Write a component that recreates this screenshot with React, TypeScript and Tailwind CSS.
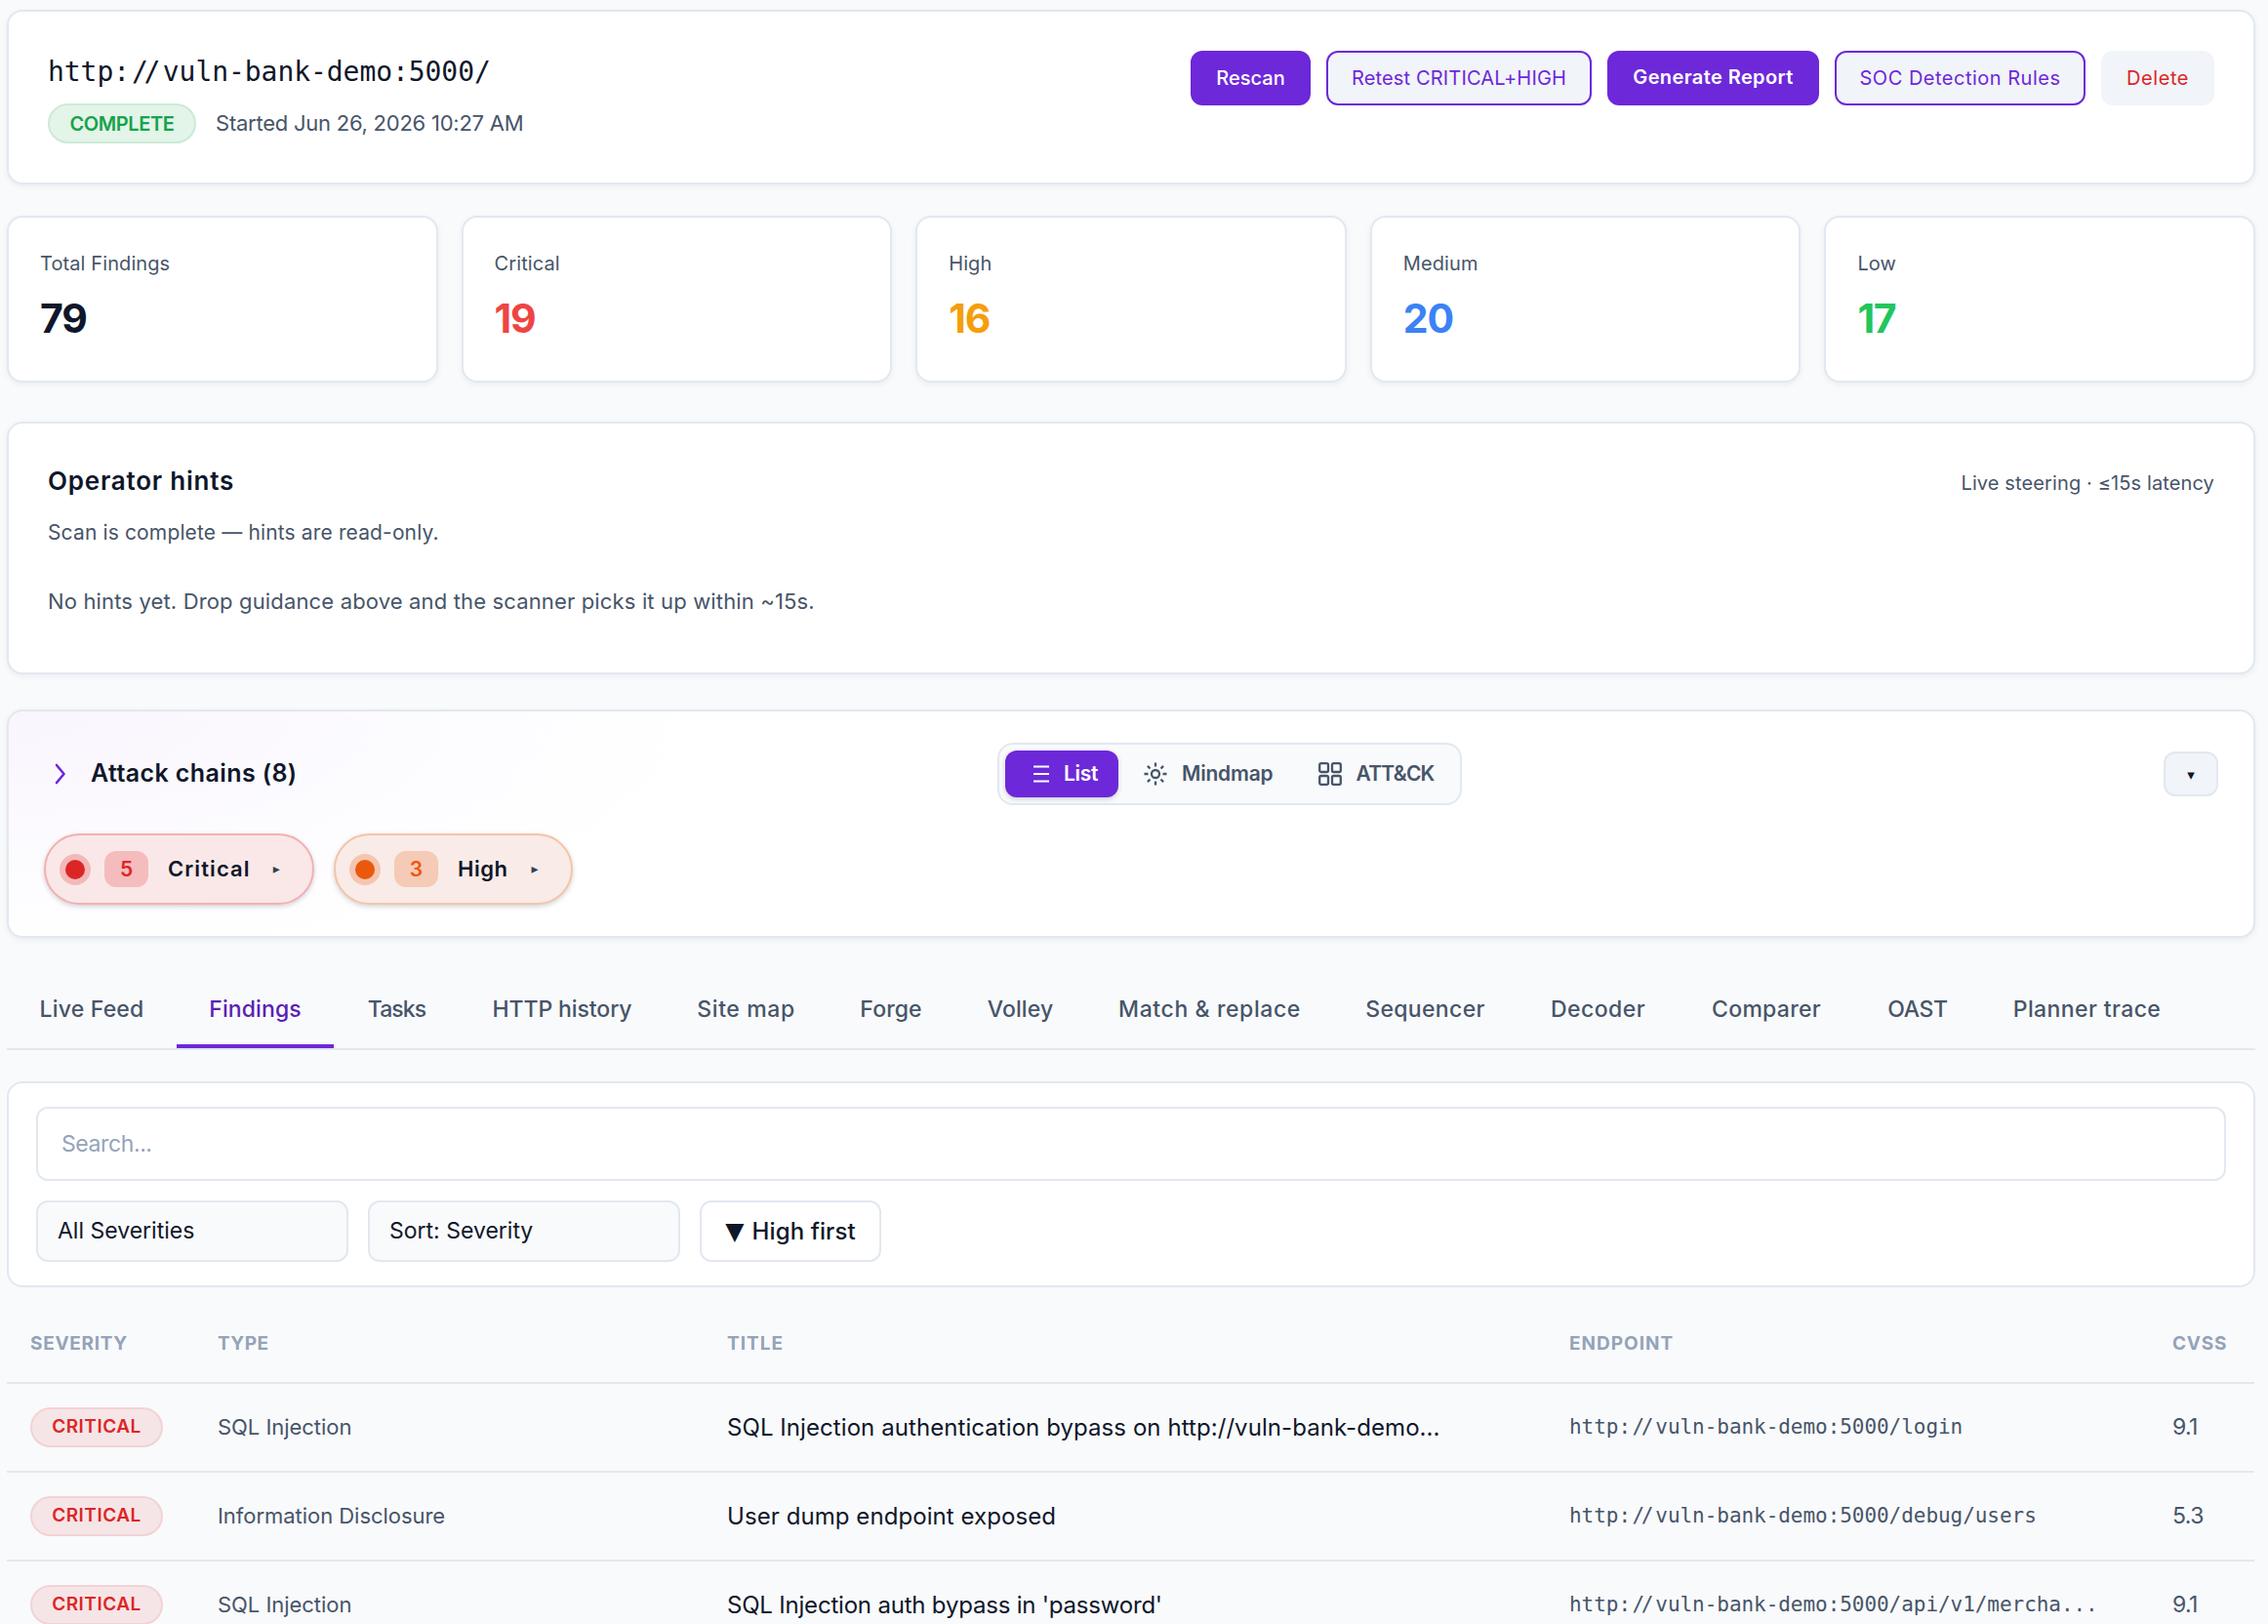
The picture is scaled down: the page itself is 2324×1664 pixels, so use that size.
import type { ReactNode } from 'react';

const actions = [
  { label: 'Rescan', className: 'w-[123px] bg-[#6d28d9] border-[#6d28d9] text-white font-medium' },
  { label: 'Retest CRITICAL+HIGH', className: 'w-[272px] bg-[#f1f4f9] border-[#6d28d9] text-[#6d28d9] tracking-[0.15px]' },
  { label: 'Generate Report', className: 'w-[217px] bg-[#6d28d9] border-[#6d28d9] text-white font-semibold tracking-[0.4px] pb-0.5' },
  { label: 'SOC Detection Rules', className: 'w-[257px] bg-[#f1f4f9] border-[#6d28d9] text-[#6d28d9] tracking-[0.5px]' },
  { label: 'Delete', className: 'w-[116px] bg-[#f1f4f9] border-[#f1f4f9] text-[#dc2626] tracking-[0.6px]' },
];

const stats = [
  { label: 'Total Findings', value: 79, color: 'text-[#0f172a]' },
  { label: 'Critical', value: 19, color: 'text-[#ef4444]' },
  { label: 'High', value: 16, color: 'text-[#f59e0b]' },
  { label: 'Medium', value: 20, color: 'text-[#3b82f6]' },
  { label: 'Low', value: 17, color: 'text-[#22c55e]' },
];

const tabs = [
  { label: 'Live Feed', className: 'w-[174px] tracking-[0.2px]' },
  { label: 'Findings', className: 'w-[161px] tracking-[0.1px]' },
  { label: 'Tasks', className: 'w-[129px] tracking-[-0.9px]' },
  { label: 'HTTP history', className: 'w-[210px] tracking-[-0.1px]' },
  { label: 'Site map', className: 'w-[167px] tracking-[0.6px]' },
  { label: 'Forge', className: 'w-[130px] tracking-[0.1px]' },
  { label: 'Volley', className: 'w-[135px] tracking-[0.1px]' },
  { label: 'Match & replace', className: 'w-[253px] tracking-[0.6px]' },
  { label: 'Sequencer', className: 'w-[189px] tracking-[0.35px]' },
  { label: 'Decoder', className: 'w-[165px] tracking-[0.45px]' },
  { label: 'Comparer', className: 'w-[180px] tracking-[0.3px]' },
  { label: 'OAST', className: 'w-[130px] tracking-[-0.4px]' },
  { label: 'Planner trace', className: 'w-[217px] tracking-[0.4px]' },
];

const findings = [
  {
    severity: 'CRITICAL',
    type: 'SQL Injection',
    title: 'SQL Injection authentication bypass on http://vuln-bank-demo...',
    endpoint: 'http://vuln-bank-demo:5000/login',
    cvss: '9.1',
  },
  {
    severity: 'CRITICAL',
    type: 'Information Disclosure',
    title: 'User dump endpoint exposed',
    endpoint: 'http://vuln-bank-demo:5000/debug/users',
    cvss: '5.3',
  },
  {
    severity: 'CRITICAL',
    type: 'SQL Injection',
    title: "SQL Injection auth bypass in 'password'",
    endpoint: 'http://vuln-bank-demo:5000/api/v1/mercha...',
    cvss: '9.1',
  },
];

function Card({ className, children }: { className: string; children: ReactNode }) {
  return (
    <section className={`rounded-2xl border-2 border-[#e2e8f0] shadow-[0_2px_6px_rgba(15,23,42,0.06)] ${className}`}>
      {children}
    </section>
  );
}

// Pulls the two slashes after the scheme together
function Url({ children }: { children: string }) {
  const [scheme, rest] = children.split('://');
  return (
    <>
      {scheme}
      <span className="tracking-[0.07em]">:</span>
      <span className="tracking-[-0.16em]">/</span>
      <span className="tracking-[0.09em]">/</span>
      {rest}
    </>
  );
}

function ListIcon() {
  return (
    <svg width="24" height="24" viewBox="0 0 24 24" fill="none" stroke="currentColor" strokeWidth="2.2">
      <path d="M4 4.5h16M4 12h16M4 19.5h16" />
    </svg>
  );
}

function MindmapIcon() {
  return (
    <svg width="24" height="24" viewBox="0 0 24 24" fill="none" stroke="currentColor" strokeWidth="2.3">
      <circle cx="12" cy="12" r="4" />
      <path d="M12 0.5v4M12 19.5v4M0.5 12h4M19.5 12h4M3.9 3.9l2.6 2.6M17.5 17.5l2.6 2.6M3.9 20.1l2.6-2.6M17.5 6.5l2.6-2.6" />
    </svg>
  );
}

function GridIcon() {
  return (
    <svg width="24" height="24" viewBox="0 0 24 24" fill="none" stroke="currentColor" strokeWidth="2.3">
      <rect x="1.2" y="1.2" width="8.8" height="8.8" rx="1.5" />
      <rect x="14" y="1.2" width="8.8" height="8.8" rx="1.5" />
      <rect x="1.2" y="14" width="8.8" height="8.8" rx="1.5" />
      <rect x="14" y="14" width="8.8" height="8.8" rx="1.5" />
    </svg>
  );
}

export default function App() {
  return (
    <div className="h-[1664px] overflow-hidden bg-[#f9fafc] pl-[7px] pr-[13px] pt-2.5 font-['Inter',sans-serif] text-[#0f172a]">
      {/* Scan header */}
      <Card className="flex h-[179px] items-start justify-between bg-white pl-10 pr-10 pt-10">
        <div>
          <h1 className="mt-1 font-['DejaVu_Sans_Mono',monospace] text-[28px] leading-[36px] tracking-[-0.06px]">
            <Url>http://vuln-bank-demo:5000/</Url>
          </h1>
          <div className="mt-[14px] flex items-center">
            <span className="flex h-[41px] w-[152px] items-center justify-center rounded-full border-2 border-[#cbead6] bg-[#e3f4e9] text-[20px] font-semibold tracking-[-0.4px] text-[#16a34a]">
              COMPLETE
            </span>
            <span className="ml-5 text-[22px] tracking-[-0.24px] text-[#475569]">Started Jun 26, 2026 10:27 AM</span>
          </div>
        </div>
        <div className="flex gap-4">
          {actions.map((a) => (
            <button
              key={a.label}
              className={`flex h-14 items-center justify-center whitespace-nowrap rounded-xl border-2 text-[20px] ${a.className}`}
            >
              {a.label}
            </button>
          ))}
        </div>
      </Card>

      {/* Severity counters */}
      <div className="mt-8 grid grid-cols-5 gap-6">
        {stats.map((s) => (
          <Card key={s.label} className="h-[171px] bg-white pl-8 pt-[33px]">
            <div className="text-[20px] leading-[28px] tracking-[0.1px] text-[#475569]">{s.label}</div>
            <div className={`mt-[17px] text-[41px] font-bold leading-[50px] tracking-[-1.2px] ${s.color}`}>{s.value}</div>
          </Card>
        ))}
      </div>

      {/* Operator hints */}
      <Card className="mt-10 h-[259px] bg-white px-10 pt-10">
        <div className="flex items-center justify-between">
          <h2 className="text-[26px] font-semibold leading-[38px] tracking-[0.78px]">Operator hints</h2>
          <span className="mt-1 text-[20px] tracking-[0.12px] text-[#475569]">Live steering · ≤15s latency</span>
        </div>
        <p className="mt-[19px] text-[21px] leading-[30px] tracking-[0.14px] text-[#475569]">
          Scan is complete — hints are read-only.
        </p>
        <p className="mt-[39px] text-[22px] leading-[32px] tracking-[0.15px] text-[#475569]">
          No hints yet. Drop guidance above and the scanner picks it up within ~15s.
        </p>
      </Card>

      {/* Attack chains */}
      <Card className="mt-9 h-[234px] bg-white bg-[radial-gradient(ellipse_720px_260px_at_0%_0%,rgba(109,40,217,0.045),transparent)] pl-9 pr-9 pt-8">
        <div className="flex items-center">
          <div className="flex w-[977px] items-center">
            <svg className="ml-[11px]" width="12" height="22" viewBox="0 0 12 22" fill="none" stroke="#6d28d9" strokeWidth="2.6" strokeLinecap="round" strokeLinejoin="round">
              <path d="M2 2l7.5 9L2 20" />
            </svg>
            <h2 className="ml-[25px] text-[25px] font-semibold tracking-[0.4px]">Attack chains (8)</h2>
          </div>
          <div className="flex h-16 w-[476px] items-center rounded-2xl border-2 border-[#e2e8f0] bg-[#f9fafc] pl-1.5 text-[21px] font-semibold text-[#475569]">
            <button className="flex h-12 w-[116px] items-center rounded-xl bg-[#6d28d9] pl-[25px] text-white shadow-[0_2px_5px_rgba(15,23,42,0.18)]">
              <ListIcon />
              <span className="ml-[11px] tracking-[-0.3px]">List</span>
            </button>
            <button className="ml-[26px] flex items-center">
              <MindmapIcon />
              <span className="ml-[15px] tracking-[-0.2px]">Mindmap</span>
            </button>
            <button className="ml-[46px] flex items-center">
              <GridIcon />
              <span className="ml-[15px] tracking-[-0.75px]">ATT&amp;CK</span>
            </button>
          </div>
          <button className="ml-auto flex h-[46px] w-14 items-center justify-center rounded-xl border-2 border-[#e2e8f0] bg-[#f1f4f9] pt-0.5 font-['DejaVu_Sans',sans-serif] text-[15px]">
            ▾
          </button>
        </div>
        <div className="mt-[29px] flex gap-5">
          <button className="flex h-[73px] w-[277px] items-center rounded-full border-2 border-[#f3b0b0] bg-[#fae8e8] pl-[14px] shadow-[0_2px_5px_rgba(15,23,42,0.18)]">
            <span className="mx-1.5 size-5 rounded-full bg-[#dc2626] ring-6 ring-[#f3b9b9]" />
            <span className="ml-[14px] flex h-[37px] w-[45px] items-center justify-center rounded-xl bg-[#f4bcbd] text-[21px] font-semibold text-[#dc2626]">5</span>
            <span className="ml-5 text-[22px] font-semibold tracking-[1.1px]">Critical</span>
            <span className="ml-[23px] font-['DejaVu_Sans',sans-serif] text-[14px] text-[#334155]">▸</span>
          </button>
          <button className="flex h-[73px] w-[245px] items-center rounded-full border-2 border-[#f5c4a5] bg-[#f9ebe7] pl-[14px] shadow-[0_2px_5px_rgba(15,23,42,0.18)]">
            <span className="mx-1.5 size-5 rounded-full bg-[#ea580c] ring-6 ring-[#f5c5b0]" />
            <span className="ml-[14px] flex h-[37px] w-[45px] items-center justify-center rounded-xl bg-[#f5cab7] text-[21px] font-semibold text-[#ea580c]">3</span>
            <span className="ml-5 text-[22px] font-semibold tracking-[0.5px]">High</span>
            <span className="ml-[24px] font-['DejaVu_Sans',sans-serif] text-[14px] text-[#334155]">▸</span>
          </button>
        </div>
      </Card>

      {/* Tabs */}
      <nav className="mt-[30px] flex h-[85px] border-b-2 border-[#e2e8f0] text-[23px] font-[450] text-[#475569]">
        {tabs.map((t) => (
          <button
            key={t.label}
            className={`shrink-0 whitespace-nowrap pt-1 ${t.className} ${
              t.label === 'Findings' ? 'rounded-t-xs border-b-4 border-[#6d28d9] pt-2! text-[#5b21b6]' : ''
            }`}
          >
            {t.label}
          </button>
        ))}
      </nav>

      {/* Filters */}
      <section className="mt-8 h-[211px] rounded-2xl border-2 border-[#e2e8f0] bg-white px-7 pt-6">
        <input
          className="block h-[76px] w-full rounded-xl border-2 border-[#e2e8f0] bg-white px-6 text-[23px] tracking-[-0.4px] placeholder:text-[#94a3b8]"
          placeholder="Search..."
        />
        <div className="mt-5 flex gap-5 text-[23px]">
          <div className="flex h-[63px] w-80 items-center rounded-xl border-2 border-[#e2e8f0] bg-[#f9fafc] pl-5">All Severities</div>
          <div className="flex h-[63px] w-80 items-center rounded-xl border-2 border-[#e2e8f0] bg-[#f9fafc] pl-5">Sort: Severity</div>
          <button className="flex h-[63px] w-[186px] items-center justify-center gap-2 rounded-xl border-2 border-[#e2e8f0] text-[24px] font-[450] tracking-[0.1px]">
            <span className="font-['DejaVu_Sans',sans-serif] text-[25px] leading-none">▼</span>
            High first
          </button>
        </div>
      </section>

      {/* Findings table */}
      <table className="mt-[17px] w-[2303px] table-fixed text-left">
        <colgroup>
          <col className="w-48" />
          <col className="w-[522px]" />
          <col className="w-[863px]" />
          <col className="w-[618px]" />
          <col />
        </colgroup>
        <thead>
          <tr className="h-[81px] border-b-2 border-[#e2e8f0] text-[19px] text-[#94a3b8]">
            <th className="pl-6 pt-0.5 font-bold tracking-[0.7px]">SEVERITY</th>
            <th className="pl-6 pt-0.5 font-bold tracking-[0.5px]">TYPE</th>
            <th className="pl-6 pt-0.5 font-bold tracking-[1px]">TITLE</th>
            <th className="pl-6 pt-0.5 font-bold tracking-[1px]">ENDPOINT</th>
            <th className="pl-6 pt-0.5 font-bold tracking-[0.8px]">CVSS</th>
          </tr>
        </thead>
        <tbody>
          {findings.map((f, i) => (
            <tr key={i} className="h-[91px] border-b-2 border-[#e2e8f0]">
              <td className="pl-6">
                <span className="flex h-[41px] w-[136px] items-center justify-center rounded-full border-2 border-[#f2d2d5] bg-[#f6e5e7] text-[19px] font-semibold tracking-[0.5px] text-[#dc2626]">
                  {f.severity}
                </span>
              </td>
              <td className="pl-6 text-[22px] tracking-[-0.04px] text-[#475569]">{f.type}</td>
              <td className={`whitespace-nowrap pl-6 text-[24px] ${i === 2 ? 'tracking-[-0.2px]' : 'tracking-[0.07px]'}`}>{f.title}</td>
              <td className="whitespace-nowrap pl-6 font-['DejaVu_Sans_Mono',monospace] text-[21px] tracking-[-0.05px] text-[#475569]">
                <Url>{f.endpoint}</Url>
              </td>
              <td className="pl-6 text-[23px] tracking-[-0.6px] text-[#475569]">{f.cvss}</td>
            </tr>
          ))}
        </tbody>
      </table>
    </div>
  );
}
